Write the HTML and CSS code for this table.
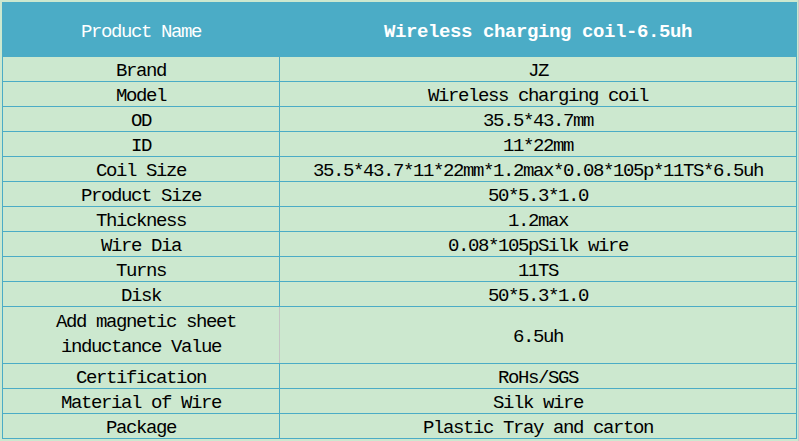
FILE: index.html
```html
<!DOCTYPE html>
<html lang="en">
<head>
<meta charset="utf-8">
<title>Wireless charging coil-6.5uh</title>
<link rel="stylesheet" href="styles.css">
</head>
<body>
<div class="page">
  <div class="sheet">
    <div class="cell head key">Product Name</div>
    <div class="cell head val">Wireless charging coil-6.5uh</div>

    <div class="cell key">Brand</div><div class="cell">JZ</div>
    <div class="cell key">Model</div><div class="cell">Wireless charging coil</div>
    <div class="cell key">OD</div><div class="cell">35.5*43.7mm</div>
    <div class="cell key">ID</div><div class="cell">11*22mm</div>
    <div class="cell key">Coil Size</div><div class="cell">35.5*43.7*11*22mm*1.2max*0.08*105p*11TS*6.5uh</div>
    <div class="cell key">Product Size</div><div class="cell">50*5.3*1.0</div>
    <div class="cell key">Thickness</div><div class="cell">1.2max</div>
    <div class="cell key">Wire Dia</div><div class="cell">0.08*105pSilk wire</div>
    <div class="cell key">Turns</div><div class="cell">11TS</div>
    <div class="cell key">Disk</div><div class="cell">50*5.3*1.0</div>
    <div class="cell key tall grey">&nbsp;Add magnetic sheet<br>inductance Value</div><div class="cell tall val-tall">6.5uh</div>
    <div class="cell key">Certification</div><div class="cell">RoHs/SGS</div>
    <div class="cell key">Material of Wire</div><div class="cell">Silk wire</div>
    <div class="cell key">Package</div><div class="cell">Plastic Tray and carton</div>
  </div>
</div>
</body>
</html>
```

FILE: styles.css
```css
html, body {
  margin: 0;
  padding: 0;
}

body {
  width: 799px;
  height: 441px;
  overflow: hidden;
  background: #cce8cf;
  font-family: "Liberation Mono", "Courier New", monospace;
  font-size: 19px;
  color: #000;
}

.page {
  padding: 2px 0 0 2px;
  height: 441px;
  box-sizing: border-box;
  border-right: 1px solid #c8c8c8;
  width: 799px;
}

.sheet {
  display: grid;
  grid-template-columns: 277px 516px;
  row-gap: 1px;
  width: 795px;
  box-sizing: border-box;
  padding: 0 1px 1px 1px;
  background: #4bacc6;
}

.cell {
  height: 24px;
  display: flex;
  align-items: center;
  justify-content: center;
  text-align: center;
  background: #cce8cf;
  line-height: 25px;
  letter-spacing: -1.4px;
  white-space: nowrap;
  padding-top: 4px;
  box-sizing: border-box;
}

.key {
  border-right: 1px solid #4bacc6;
}

.head {
  height: 54px;
  background: #4bacc6;
  color: #fff;
  padding-top: 7px;
}

.head.key {
  border-right-color: #4bacc6;
}

.head.val {
  font-weight: bold;
  letter-spacing: -0.4px;
}

.tall {
  height: 56px;
  padding-top: 0;
}

.val-tall {
  padding-top: 5px;
}

.grey {
  border-right-color: #c4c4c4;
}
```
